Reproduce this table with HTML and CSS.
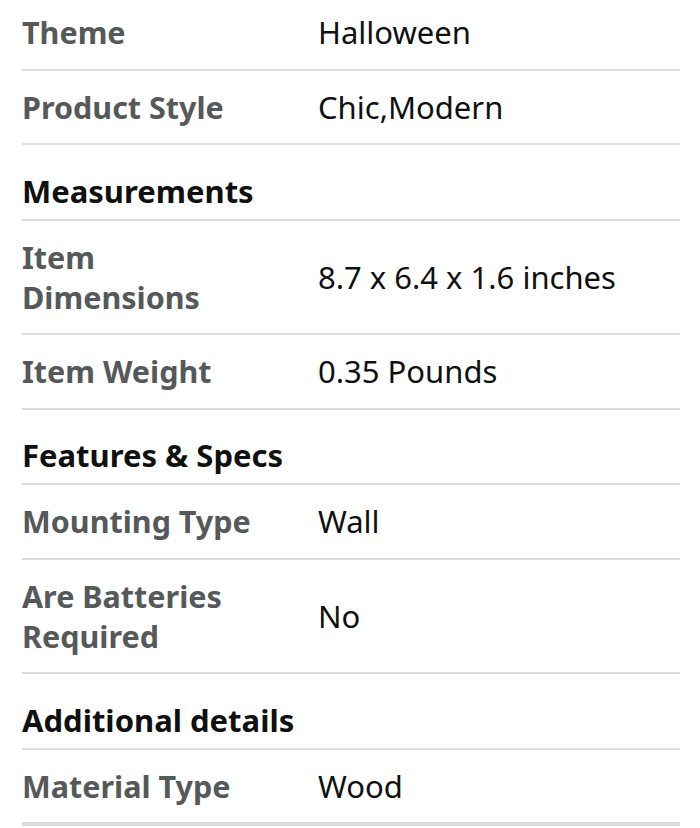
FILE: index.html
```html
<!DOCTYPE html>
<html lang="en">
<head>
<meta charset="utf-8">
<link rel="stylesheet" href="styles.css">
</head>
<body>
<div class="specs">
  <div class="row first"><div class="label">Theme</div><div class="value">Halloween</div></div>
  <div class="row"><div class="label">Product Style</div><div class="value">Chic,Modern</div></div>
  <div class="row head">Measurements</div>
  <div class="row"><div class="label">Item<br>Dimensions</div><div class="value">8.7 x 6.4 x 1.6 inches</div></div>
  <div class="row"><div class="label">Item Weight</div><div class="value">0.35 Pounds</div></div>
  <div class="row head">Features &amp; Specs</div>
  <div class="row"><div class="label">Mounting Type</div><div class="value">Wall</div></div>
  <div class="row"><div class="label">Are Batteries<br>Required</div><div class="value">No</div></div>
  <div class="row head">Additional details</div>
  <div class="row last"><div class="label">Material Type</div><div class="value">Wood</div></div>
</div>
</body>
</html>
```
FILE: styles.css
```css
html, body {
  margin: 0;
  padding: 0;
  background: #fff;
}
body {
  font-family: "Noto Sans", "Open Sans", sans-serif;
  font-size: 31px;
  color: #0f1111;
}
.specs {
  margin: -4px 20px 0 22px;
}
.row {
  display: grid;
  grid-template-columns: 296px 1fr;
  align-items: center;
  padding: 16.25px 0;
  line-height: 40px;
  border-bottom: 2px solid #dcdcdc;
}
.row.head {
  display: block;
  padding: 25.5px 0 8px;
  font-weight: 700;
  color: #0f1111;
}
.row.last {
  border-bottom-width: 4px;
}
.label {
  font-weight: 700;
  font-size: 30.5px;
  color: #565959;
}
.value {
  color: #0f1111;
}
```
